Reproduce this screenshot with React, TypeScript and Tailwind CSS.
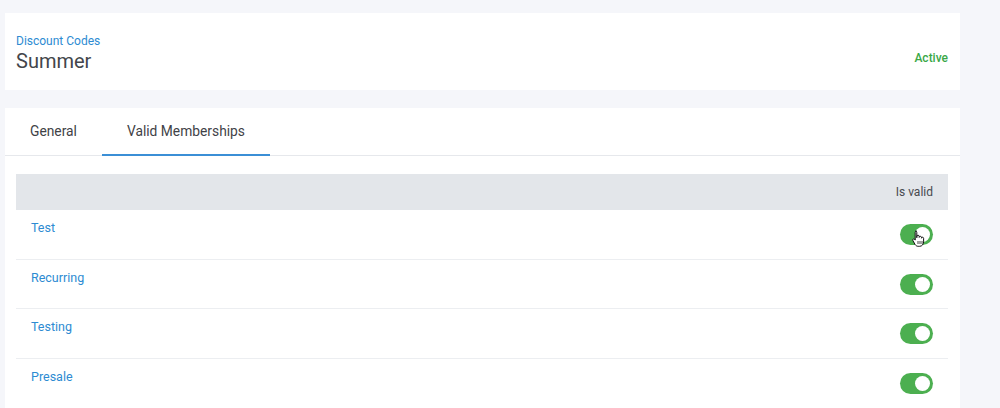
import React from "react";

const rows = ["Test", "Recurring", "Testing", "Presale"];

function Toggle({ cursor }: { cursor?: boolean }) {
  return (
    <div className="relative mt-[14px] h-[21px] w-[33px] rounded-full bg-[#4caf50]">
      <div className="absolute right-[3px] top-[3px] h-[15px] w-[15px] rounded-full bg-white" />
      {cursor && (
        <svg
          className="absolute left-[12px] top-[6px]"
          width="13"
          height="17"
          viewBox="0 0 13 17"
        >
          <path
            d="M3.5 1.2c.8 0 1.3.6 1.3 1.3v5.2V6.4c0-.7.5-1.2 1.2-1.2s1.2.5 1.2 1.2v1c0-.7.5-1.1 1.1-1.1.7 0 1.2.5 1.2 1.1v.8c0-.6.5-1 1-1 .6 0 1.1.5 1.1 1.1v3.6c0 2.4-1.6 4.4-4 4.4H6.2c-1.3 0-2.2-.6-3-1.6L.9 10.6c-.4-.5-.3-1.2.2-1.5.5-.4 1.1-.3 1.5.2l.6.8V2.5c0-.7.5-1.3 1.3-1.3z"
            fill="#fff"
            stroke="#111"
            strokeWidth="1"
            strokeLinejoin="round"
          />
          <path d="M6 11v3M8 11v3M10 11v3" stroke="#111" strokeWidth="0.8" />
        </svg>
      )}
    </div>
  );
}

export default function App() {
  return (
    <div
      className="h-[408px] w-[1000px] overflow-hidden bg-[#f5f6fa] pl-[5px] pr-[40px] pt-[13px]"
      style={{ fontFamily: "Roboto, 'Noto Sans', sans-serif" }}
    >
      <div className="flex h-[77px] items-start justify-between bg-white pl-[11px] pr-[12px] pt-[20px]">
        <div>
          <div className="text-[12px] leading-4 text-[#2d8bd2]">Discount Codes</div>
          <div className="text-[20px] leading-6 text-[#43464b]">Summer</div>
        </div>
        <div className="pt-[17px] text-[12px] font-medium leading-4 text-[#3aa847]">Active</div>
      </div>

      <div className="mt-[18px] h-[320px] bg-white">
        <div className="flex h-[48px] border-b border-[#e6e8ec]">
          <div className="flex items-center px-[25px] text-[13.8px] text-[#3f4247]">General</div>
          <div className="relative flex items-center px-[25px] text-[13.8px] text-[#3f4247]">
            Valid Memberships
            <div className="absolute bottom-[-1px] left-0 right-0 h-[2px] bg-[#3b8fd6]" />
          </div>
        </div>

        <div className="pl-[11px] pr-[12px] pt-[18px]">
          <div className="flex h-[36px] items-center justify-end bg-[#e3e6ea] pr-[15px] text-[12px] text-[#474a4f]">
            Is valid
          </div>
          {rows.map((r, i) => (
            <div
              key={r}
              className={`flex h-[49.5px] items-start justify-between pl-[15px] pr-[15px] ${
                i < rows.length - 1 ? "border-b border-[#eceef1]" : ""
              }`}
            >
              <div className="pt-[10px] text-[12.5px] leading-4 text-[#2d8bd2]">{r}</div>
              <Toggle cursor={i === 0} />
            </div>
          ))}
        </div>
      </div>
    </div>
  );
}
